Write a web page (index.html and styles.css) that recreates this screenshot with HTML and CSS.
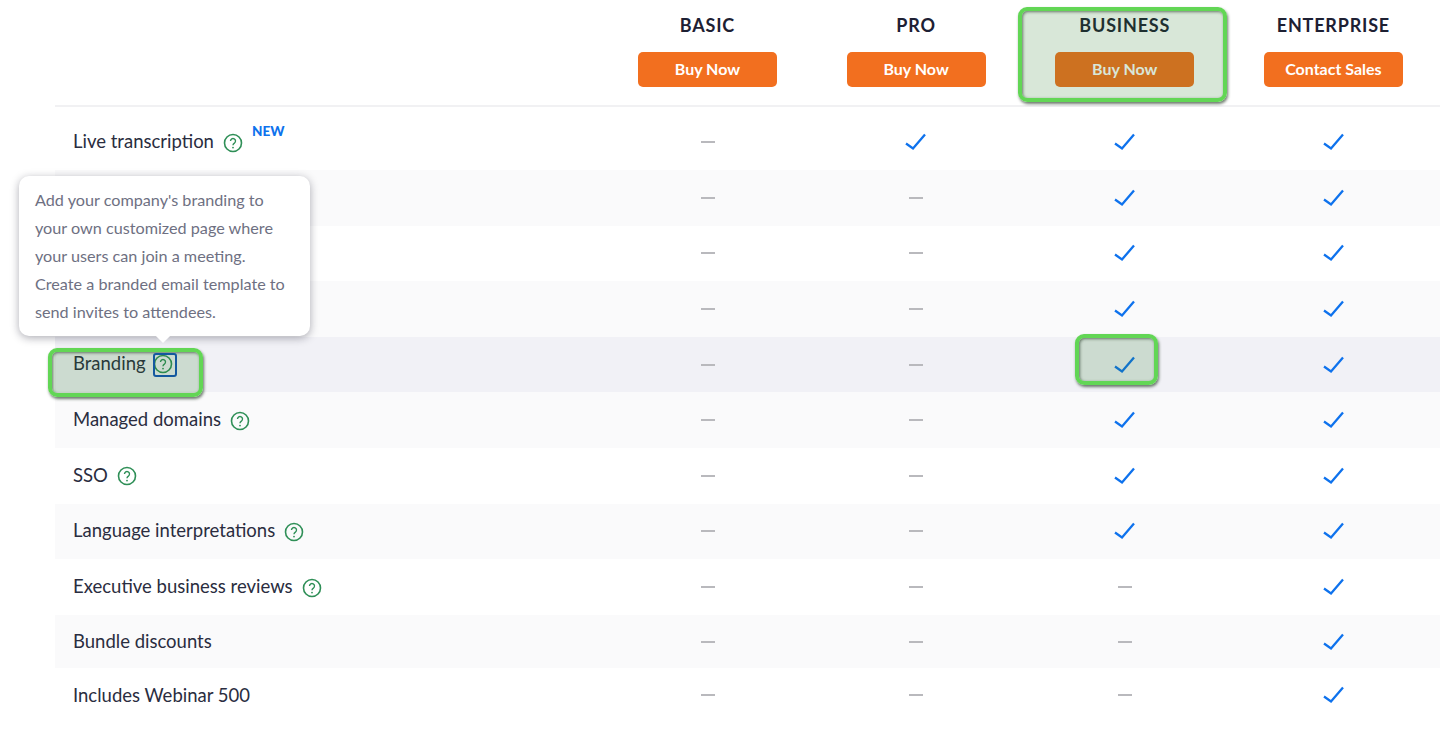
FILE: index.html
```html
<!DOCTYPE html>
<html lang="en">
<head>
<meta charset="utf-8">
<title>Plan comparison</title>
<link rel="stylesheet" href="styles.css">
</head>
<body>
<svg class="defs" width="0" height="0" aria-hidden="true">
  <symbol id="check" viewBox="0 0 22 18"><path d="M1 10.5 8 15.500 20 1.500" fill="none" stroke="currentColor" stroke-width="2.300"/></symbol>
  <symbol id="help" viewBox="0 0 20 20"><circle cx="10" cy="10" r="8.500" fill="none" stroke="currentColor" stroke-width="1.600"/><path d="M7.500 8a2.500 2.500 0 1 1 3.900 2.100c-.9.6-1.400 1-1.400 2.100" fill="none" stroke="currentColor" stroke-width="1.400"/><circle cx="10" cy="14.600" r=".9" fill="currentColor"/></symbol>
</svg>
<main class="page">
  <header class="head">
    <div class="plan"><h2>BASIC</h2><a class="btn">Buy Now</a></div>
    <div class="plan"><h2>PRO</h2><a class="btn">Buy Now</a></div>
    <div class="plan"><h2>BUSINESS</h2><a class="btn">Buy Now</a></div>
    <div class="plan"><h2>ENTERPRISE</h2><a class="btn">Contact Sales</a></div>
  </header>
  <section class="rows">
    <div class="row"><div class="name">Live transcription<svg class="help"><use href="#help"/></svg><sup class="new">NEW</sup></div><i class="dash"></i><svg class="check"><use href="#check"/></svg><svg class="check"><use href="#check"/></svg><svg class="check"><use href="#check"/></svg></div>
    <div class="row alt"><div class="name"></div><i class="dash"></i><i class="dash"></i><svg class="check"><use href="#check"/></svg><svg class="check"><use href="#check"/></svg></div>
    <div class="row"><div class="name"></div><i class="dash"></i><i class="dash"></i><svg class="check"><use href="#check"/></svg><svg class="check"><use href="#check"/></svg></div>
    <div class="row alt"><div class="name"></div><i class="dash"></i><i class="dash"></i><svg class="check"><use href="#check"/></svg><svg class="check"><use href="#check"/></svg></div>
    <div class="row hover"><div class="name">Branding<svg class="help tight"><use href="#help"/></svg></div><i class="dash"></i><i class="dash"></i><svg class="check"><use href="#check"/></svg><svg class="check"><use href="#check"/></svg></div>
    <div class="row alt"><div class="name">Managed domains<svg class="help"><use href="#help"/></svg></div><i class="dash"></i><i class="dash"></i><svg class="check"><use href="#check"/></svg><svg class="check"><use href="#check"/></svg></div>
    <div class="row"><div class="name">SSO<svg class="help"><use href="#help"/></svg></div><i class="dash"></i><i class="dash"></i><svg class="check"><use href="#check"/></svg><svg class="check"><use href="#check"/></svg></div>
    <div class="row alt"><div class="name">Language interpretations<svg class="help"><use href="#help"/></svg></div><i class="dash"></i><i class="dash"></i><svg class="check"><use href="#check"/></svg><svg class="check"><use href="#check"/></svg></div>
    <div class="row"><div class="name">Executive business reviews<svg class="help"><use href="#help"/></svg></div><i class="dash"></i><i class="dash"></i><i class="dash"></i><svg class="check"><use href="#check"/></svg></div>
    <div class="row alt short"><div class="name">Bundle discounts</div><i class="dash"></i><i class="dash"></i><i class="dash"></i><svg class="check"><use href="#check"/></svg></div>
    <div class="row short last"><div class="name">Includes Webinar 500</div><i class="dash"></i><i class="dash"></i><i class="dash"></i><svg class="check"><use href="#check"/></svg></div>
  </section>
  <div class="mark mark-plan"></div>
  <div class="mark mark-check"></div>
  <div class="mark mark-name"></div>
  <div class="focus"></div>
  <div class="tip">Add your company's branding to<br>your own customized page where<br>your users can join a meeting.<br>Create a branded email template to<br>send invites to attendees.</div>
</main>
</body>
</html>
```
FILE: styles.css
```css
* { box-sizing: border-box; }
html, body { margin: 0; height: 100%; background: #fff; overflow: hidden; }
body { font-family: Lato, "Open Sans", sans-serif; color: #23263a; }
.defs { position: absolute; }
.page { position: relative; width: 1440px; height: 742px; padding-left: 55px; }

.head {
  display: grid;
  grid-template-columns: repeat(4, 208.670px);
  height: 107px;
  padding-left: 548.100px;
  border-bottom: 2px solid #f1f1f3;
}
.plan { display: flex; flex-direction: column; align-items: center; padding-top: 12px; }
.plan h2 { margin: 0 0 14px; font-size: 18px; line-height: 26px; font-weight: 700; letter-spacing: .8px; color: #1d2033; }
.btn {
  width: 139px; height: 35px; border-radius: 5px; background: #f26f1f;
  color: #fff; font-size: 16px; font-weight: 700; line-height: 33px; text-align: center;
}

.rows { padding-top: 7.500px; }
.row {
  display: grid;
  grid-template-columns: 548.300px repeat(4, 208.670px);
  align-items: center;
  justify-items: center;
  height: 55.600px;
}
.row.short { height: 53.500px; }
.row.alt { background: #fafafb; }
.row.hover { background: #f1f1f6; }
.name {
  justify-self: start; display: flex; align-items: center; position: relative;
  padding-left: 18px; font-size: 18.500px; line-height: 24px; color: #2a2d40;
  transform: translateY(-1px);
}
.row.hover .name { transform: translateY(-2px); }
.row.last .name { transform: none; }
.help { width: 20px; height: 20px; margin: 3px 0 0 9px; color: #2f8f57; flex: none; }
.help.tight { margin-left: 7px; margin-top: 3px; }
.new { position: absolute; left: 197px; top: -6px; font-size: 13.500px; line-height: 16px; font-weight: 900; color: #0e72ed; }
.check { width: 22px; height: 18px; color: #0e72ed; }
.dash { display: block; width: 14px; height: 2px; background: #b9b9bd; }

.mark {
  position: absolute; border: 4px solid #62d655; border-radius: 9px;
  background: rgba(40, 120, 40, .18);
  box-shadow: 1px 2px 3px rgba(30, 50, 30, .65), inset 1px 1px 3px rgba(30, 50, 30, .6);
}
.mark-plan { left: 1018px; top: 7px; width: 209px; height: 95px; }
.mark-check { left: 1075px; top: 334px; width: 83px; height: 51px; }
.mark-name { left: 48px; top: 348px; width: 155px; height: 49px; }
.focus { position: absolute; left: 153px; top: 353px; width: 24px; height: 24px; border: 2px solid #14589f; border-radius: 3px; }

.tip {
  position: absolute; left: 19px; top: 176px; width: 291px; height: 160px;
  padding: 10px 16px; background: #fff; border-radius: 10px;
  box-shadow: 0 2px 8px rgba(20, 20, 40, .35);
  font-size: 16.200px; line-height: 28px; color: #6e7082; white-space: nowrap;
}
.tip::after {
  content: ""; position: absolute; left: 139px; bottom: -5px; width: 10px; height: 10px;
  background: #fff; transform: rotate(45deg);
}
```
